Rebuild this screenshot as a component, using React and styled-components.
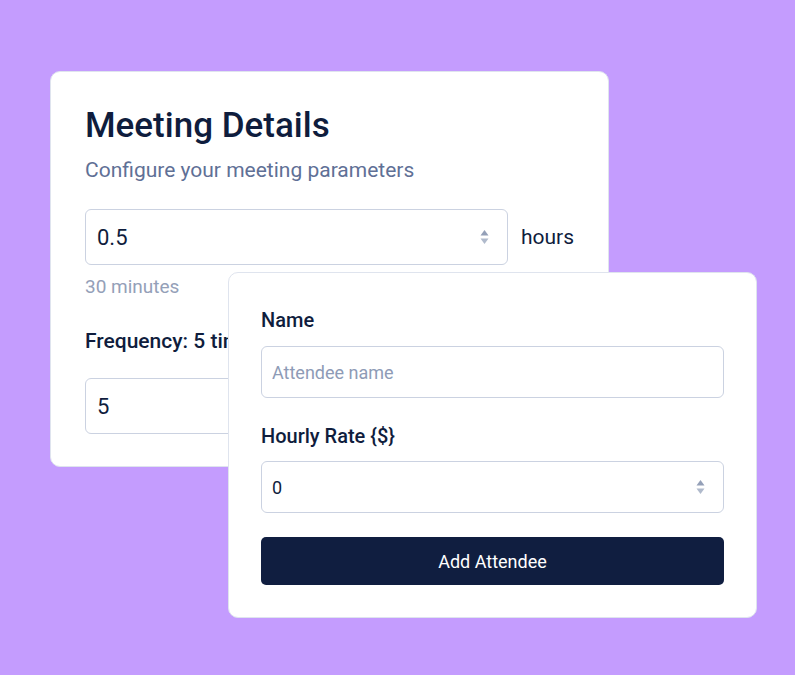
import React from "react";
import styled, { createGlobalStyle } from "styled-components";

const GlobalStyle = createGlobalStyle`
  * {
    box-sizing: border-box;
  }
  body {
    margin: 0;
    background: #c49cfe;
    font-family: Roboto, "Noto Sans", Arial, sans-serif;
    color: #0f1d3d;
  }
`;

const Page = styled.div`
  min-height: 100vh;
  padding: 71px 0 0 50px;
`;

const Stage = styled.div`
  position: relative;
  width: 707px;
`;

const Card = styled.div`
  background: #ffffff;
  border: 1px solid #dfe4ee;
  border-radius: 10px;
`;

const DetailsCard = styled(Card)`
  width: 559px;
  padding: 33px 34px 32px;
`;

const AttendeeCard = styled(Card)`
  position: absolute;
  left: 178px;
  top: 201px;
  width: 529px;
  padding: 33px 32px 32px;
`;

const Title = styled.h2`
  margin: 0;
  font-size: 35px;
  line-height: 1.2;
  font-weight: 500;
  color: #0f1d3d;
`;

const Subtitle = styled.p`
  margin: 9px 0 24px;
  font-size: 21px;
  line-height: 1.4;
  color: #5f7096;
`;

const Row = styled.div`
  display: flex;
  align-items: center;
  gap: 13px;
`;

const Unit = styled.span`
  font-size: 21px;
  color: #0f1d3d;
`;

const Hint = styled.div`
  margin-top: 9px;
  font-size: 19px;
  line-height: 1.4;
  color: #94a0b8;
`;

const Label = styled.label`
  display: block;
  margin: ${(p) => p.$top || 0}px 0 ${(p) => p.$bottom || 0}px;
  font-size: ${(p) => p.$size || 20}px;
  line-height: 1.4;
  font-weight: 500;
  color: #0f1d3d;
  white-space: nowrap;
`;

const Field = styled.div`
  flex: 1;
  display: flex;
  align-items: center;
  height: ${(p) => p.$height}px;
  padding: 0 18px 0 ${(p) => p.$indent}px;
  border: 1px solid #cbd2e1;
  border-radius: 6px;
  background: #ffffff;
`;

const Input = styled.input`
  flex: 1;
  min-width: 0;
  border: none;
  outline: none;
  padding: 0;
  background: transparent;
  font-family: inherit;
  font-size: ${(p) => p.$size}px;
  color: #0f1d3d;

  &::placeholder {
    color: #8e9bb6;
  }
`;

const Button = styled.button`
  display: block;
  width: 100%;
  height: 48px;
  margin-top: 24px;
  border: none;
  border-radius: 5px;
  background: #101e40;
  color: #ffffff;
  font-family: inherit;
  font-size: 18px;
  cursor: pointer;
`;

const Spinner = () => (
  <svg width="9" height="18" viewBox="0 0 9 18">
    <polygon points="4.5,2 8.5,7.5 0.5,7.5" fill="#94a0b8" />
    <polygon points="0.5,10.5 8.5,10.5 4.5,16" fill="#b0bacc" />
  </svg>
);

const NumberField = ({ value, height, indent, size }) => (
  <Field $height={height} $indent={indent}>
    <Input type="text" defaultValue={value} $size={size} />
    <Spinner />
  </Field>
);

const App = () => {
  return (
    <Page>
      <GlobalStyle />
      <Stage>
        <DetailsCard>
          <Title>Meeting Details</Title>
          <Subtitle>Configure your meeting parameters</Subtitle>
          <Row>
            <NumberField value="0.5" height={56} indent={11} size={22} />
            <Unit>hours</Unit>
          </Row>
          <Hint>30 minutes</Hint>
          <Label $top={26} $bottom={22} $size={21}>
            Frequency: 5 times per week
          </Label>
          <Row>
            <NumberField value="5" height={56} indent={11} size={22} />
            <Unit>times</Unit>
          </Row>
        </DetailsCard>

        <AttendeeCard>
          <Label $bottom={12}>Name</Label>
          <Field $height={52} $indent={10}>
            <Input type="text" placeholder="Attendee name" $size={18} />
          </Field>
          <Label $top={24} $bottom={11}>
            Hourly Rate {"{$}"}
          </Label>
          <NumberField value="0" height={52} indent={10} size={18} />
          <Button type="button">Add Attendee</Button>
        </AttendeeCard>
      </Stage>
    </Page>
  );
};

export default App;
